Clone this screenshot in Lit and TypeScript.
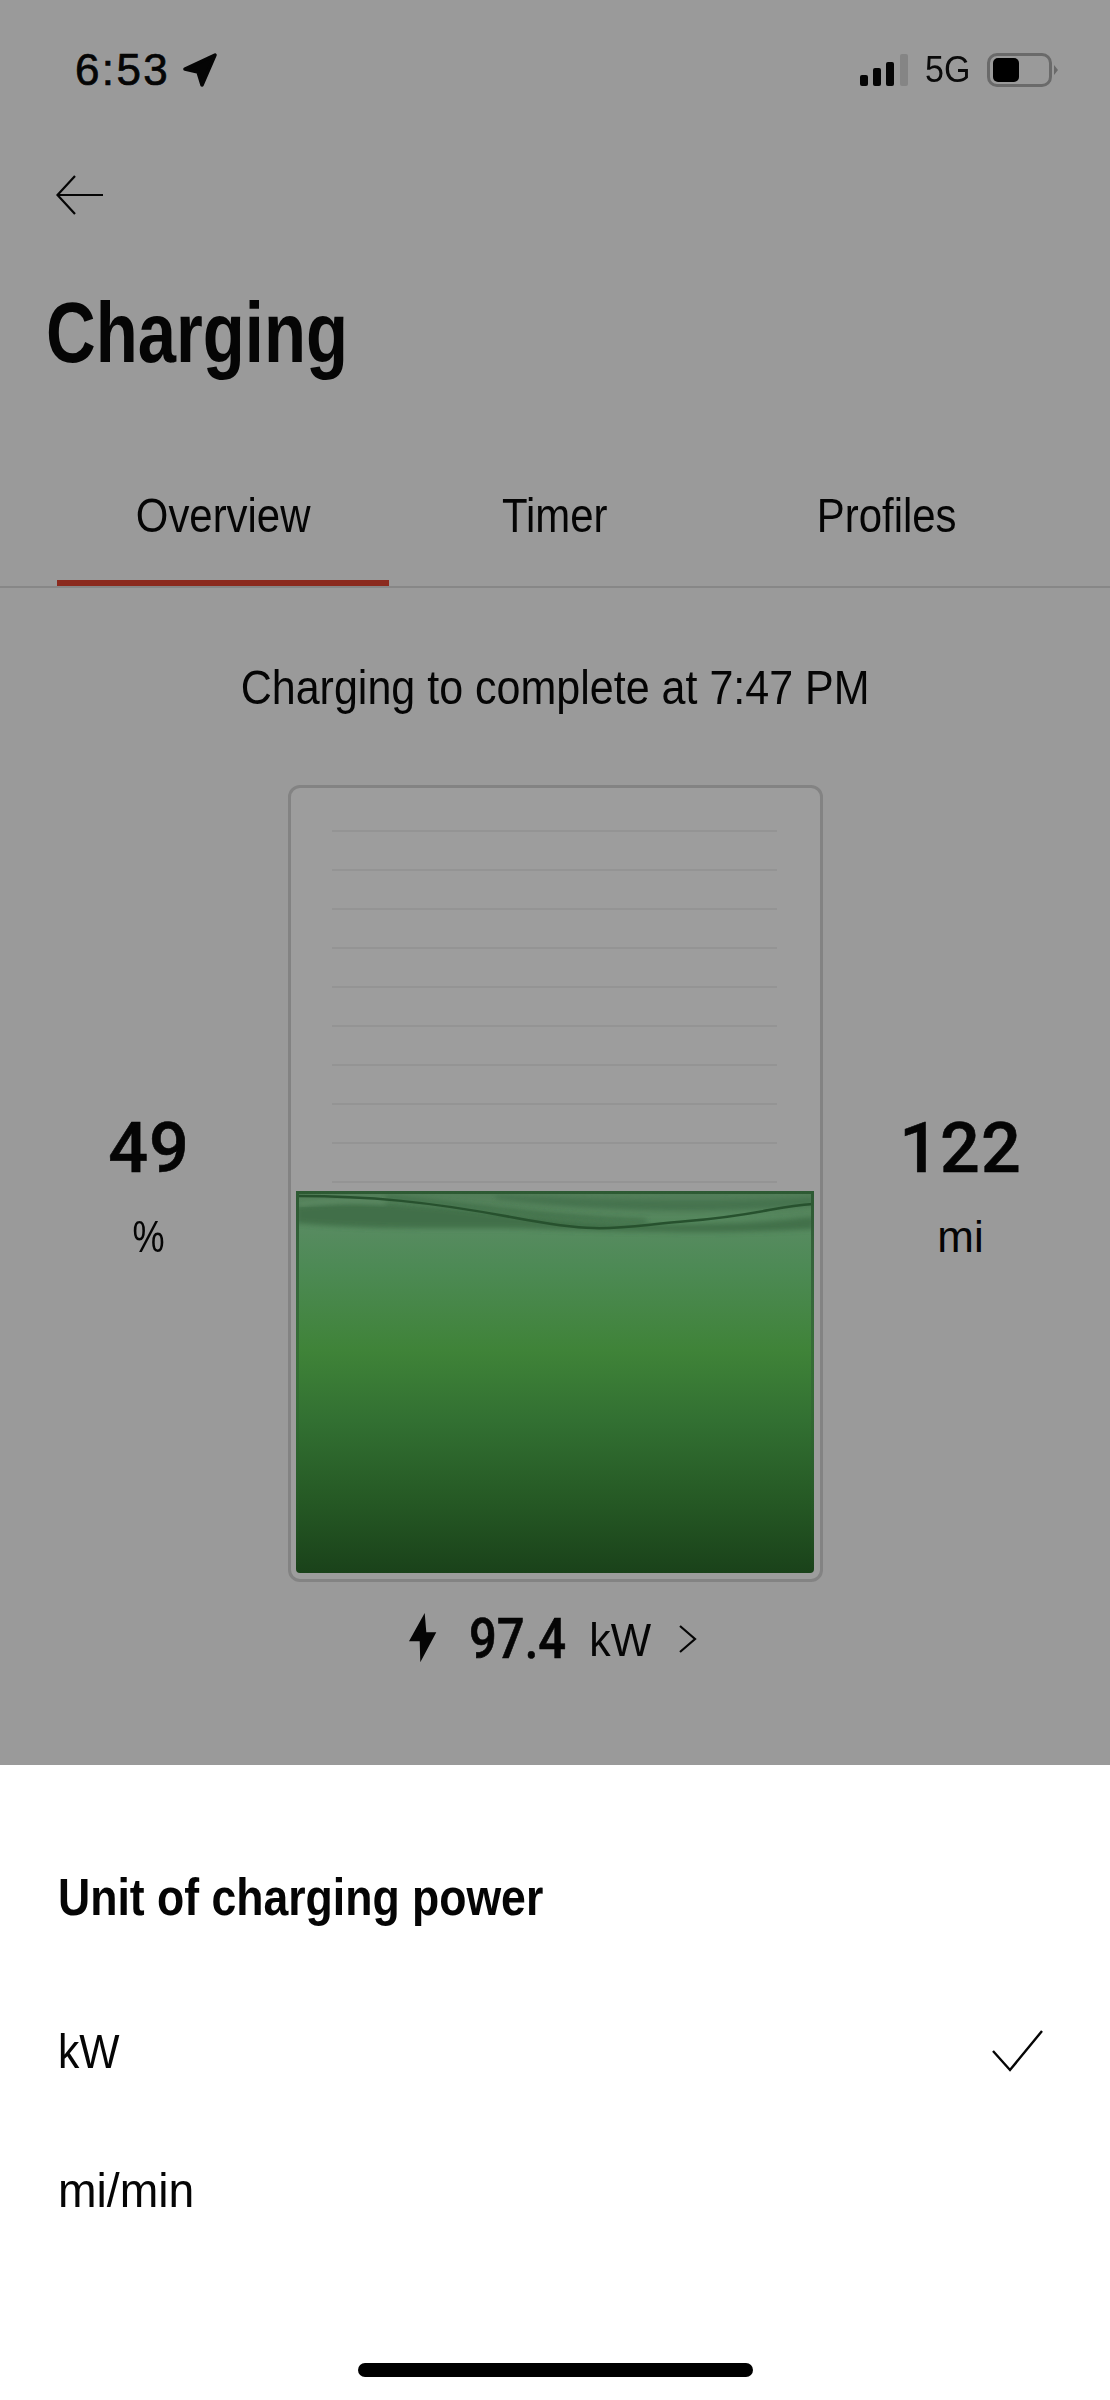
import { LitElement, html, css, svg } from "lit";
import { customElement } from "lit/decorators.js";

const lines = Array.from({ length: 10 });

@customElement("app-root")
export class AppRoot extends LitElement {
  static styles = css`
    :host { display: flex; flex-direction: column; width: 1110px; height: 2400px; background: #9a9a9a; color: #050505;
      font-family: "Liberation Sans", Arial, sans-serif; overflow: hidden; }
    .n { display: inline-block; white-space: nowrap; transform-origin: center; }
    .l { transform-origin: left center; }
    .s80 { transform: scaleX(0.8); }
    .s855 { transform: scaleX(0.855); }
    .s87 { transform: scaleX(0.87); }
    .s878 { transform: scaleX(0.878); }
    .s857 { transform: scaleX(0.857); }
    .s89 { transform: scaleX(0.89); }
    .s93 { transform: scaleX(0.93); }
    .s945 { transform: scaleX(0.945); }
    .s92 { transform: scaleX(0.92); }
    .status { height: 140px; flex: none; display: flex; align-items: center; justify-content: space-between; padding: 0 52px 0 75px; box-sizing: border-box; }
    .time { display: flex; align-items: center; gap: 12px; font-size: 44px; letter-spacing: 2.400px; -webkit-text-stroke: 0.7px #050505; }
    .sys { display: flex; align-items: center; }
    .signal { display: flex; align-items: flex-end; gap: 5.300px; height: 32px; margin-right: 15px; }
    .signal i { display: block; width: 8px; background: #050505; border-radius: 2px; }
    .signal i.off { background: #858585; }
    .fiveg { font-size: 37px; margin-right: 15px; color: #0a0a0a; }
    .battery { display: flex; align-items: center; gap: 2px; }
    .cell { width: 65px; height: 34px; box-sizing: border-box; border: 3px solid #6a6a6a; border-radius: 10px; padding: 2px 3px; }
    .cell b { display: block; width: 26px; height: 24px; background: #000; border-radius: 5px; }
    .tip { width: 4px; height: 10px; background: #6a6a6a; clip-path: polygon(0 0, 100% 50%, 0 100%); }
    .back { height: 104px; flex: none; box-sizing: border-box; padding: 5px 0 0 56px; display: flex; align-items: center; }
    .title { height: 174px; flex: none; box-sizing: border-box; padding: 2px 0 0 46px; display: flex; align-items: center; font-size: 86px; font-weight: 700; }
    .tabs { flex: none; display: grid; grid-template-columns: repeat(3, 332px); padding: 0 57px; height: 170px; box-sizing: border-box; border-bottom: 2px solid #878787; }
    .tab { height: 168px; box-sizing: border-box; padding-top: 69px; text-align: center; font-size: 49px; line-height: 56px; }
    .tab.active { border-bottom: 6px solid #8b2a1e; }
    .message { height: 197px; flex: none; display: flex; align-items: center; justify-content: center; font-size: 49px; }
    .gauge { height: 797px; flex: none; display: grid; grid-template-columns: 288px 535px 287px; }
    .side { display: flex; flex-direction: column; align-items: center; padding-top: 329px; }
    .num { font: 500 70px/68px Roboto, sans-serif; height: 68px; letter-spacing: 1px; -webkit-text-stroke: 0.6px #050505; }
    .side.left .num, .side.left .unit { transform: translateX(5px); }
    .side.right .num, .side.right .unit { transform: translateX(-6px); }
    .unit { font-size: 44px; line-height: 50px; margin-top: 30px; }
    .side.left .unit .n { transform: scaleX(0.82); }
    .frame { box-sizing: border-box; border: 3px solid #838383; border-radius: 12px; background: #9d9d9d; padding: 40px 5px 6px; display: flex; flex-direction: column; height: 797px; }
    .lines { display: flex; flex-direction: column; gap: 37px; padding: 2px 38px 0 36px; height: 363px; box-sizing: border-box; flex: none; }
    .lines i { display: block; height: 2px; background: #949494; }
    .fill { display: block; width: 518px; height: 382px; flex: none; }
    .power { height: 183px; flex: none; box-sizing: border-box; padding: 28px 0 0 409px; }
    .power-row { display: flex; align-items: center; height: 56px; }
    .kw-num { font: 500 55px/56px Roboto, sans-serif; margin-left: 32px; -webkit-text-stroke: 0.6px #050505; transform: translateY(1px); }
    .kw-unit { font-size: 46px; line-height: 56px; margin-left: 9px; transform: translateY(2px); }
    .chev { margin-left: 26px; transform: translateY(1px); }
    .sheet { flex: 1; background: #fff; color: #050505; padding-left: 58px; padding-right: 66px; display: flex; flex-direction: column; min-height: 0; }
    .sheet-title { font-size: 52px; font-weight: 700; height: 216px; box-sizing: border-box; padding-top: 102px; line-height: 60px; }
    .option { display: flex; align-items: center; justify-content: space-between; font-size: 49px; height: 139px; line-height: 56px; }
    .home-wrap { display: flex; justify-content: center; margin: auto -66px 23px -58px; }
    .home { width: 395px; height: 14px; background: #000; border-radius: 7px; }
  `;

  render() {
    return html`
      <div class="status">
        <div class="time">6:53
          <svg width="36" height="35" viewBox="0 0 36 35"><path d="M3 16 33 2 20 32 16 19Z" fill="#050505" stroke="#050505" stroke-width="3.500" stroke-linejoin="round"/></svg>
        </div>
        <div class="sys">
          <div class="signal">
            <i style="height:11px"></i><i style="height:18px"></i><i style="height:24px"></i><i class="off" style="height:32px"></i>
          </div>
          <div class="fiveg"><span class="n s92">5G</span></div>
          <div class="battery"><div class="cell"><b></b></div><div class="tip"></div></div>
        </div>
      </div>
      <div class="back">
        <svg width="48" height="40" viewBox="0 0 48 40" fill="none" stroke="#050505" stroke-width="2.200"><path d="M47 20H2"/><path d="M19 1 1.500 20 19 39"/></svg>
      </div>
      <div class="title"><span class="n l s80">Charging</span></div>
      <div class="tabs">
        <div class="tab active"><span class="n s855">Overview</span></div>
        <div class="tab"><span class="n s855">Timer</span></div>
        <div class="tab"><span class="n s855">Profiles</span></div>
      </div>
      <div class="message"><span class="n s878">Charging to complete at 7:47 PM</span></div>
      <div class="gauge">
        <div class="side left"><div class="num">49</div><div class="unit"><span class="n">%</span></div></div>
        <div class="frame">
          <div class="lines">${lines.map(() => html`<i></i>`)}</div>
          ${this.renderFill()}
        </div>
        <div class="side right"><div class="num">122</div><div class="unit"><span class="n">mi</span></div></div>
      </div>
      <div class="power">
        <div class="power-row">
          <svg width="28" height="50" viewBox="0 0 28 50"><path d="M15.700 0 0 28.300H10.700L11.300 49.300 27.300 19.300H17.300Z" fill="#050505"/></svg>
          <div class="kw-num"><span class="n l s89">97.4</span></div>
          <div class="kw-unit"><span class="n s93">kW</span></div>
          <svg class="chev" width="18" height="28" viewBox="0 0 18 28" fill="none" stroke="#050505" stroke-width="2.200"><path d="M1 1 16 14 1 27"/></svg>
        </div>
      </div>
      <div class="sheet">
        <div class="sheet-title"><span class="n l s857">Unit of charging power</span></div>
        <div class="option"><span class="n l s87">kW</span>
          <svg width="52" height="42" viewBox="0 0 52 42" fill="none" stroke="#050505" stroke-width="2.400"><path d="M1 21 18 40 50 1"/></svg>
        </div>
        <div class="option"><span class="n l s945">mi/min</span></div>
        <div class="home-wrap"><div class="home"></div></div>
      </div>
    `;
  }

  renderFill() {
    return svg`<svg class="fill" viewBox="0 0 518 382" preserveAspectRatio="none">
      <defs>
        <linearGradient id="g" x1="0" y1="0" x2="0" y2="1">
          <stop offset="0" stop-color="#527d58"/>
          <stop offset="0.1" stop-color="#578b60"/>
          <stop offset="0.2" stop-color="#4d8a55"/>
          <stop offset="0.42" stop-color="#3f8338"/>
          <stop offset="0.6" stop-color="#327032"/>
          <stop offset="0.8" stop-color="#265a25"/>
          <stop offset="1" stop-color="#1a421a"/>
        </linearGradient>
        <linearGradient id="edge" gradientUnits="userSpaceOnUse" x1="0" y1="0" x2="0" y2="382">
          <stop offset="0" stop-color="#2d5a33"/>
          <stop offset="0.5" stop-color="#2d5a33" stop-opacity="0.45"/>
          <stop offset="1" stop-color="#2d5a33" stop-opacity="0"/>
        </linearGradient>
        <filter id="soft" x="-5%" y="-40%" width="110%" height="180%"><feGaussianBlur stdDeviation="2.500"/></filter>
      </defs>
      <rect width="518" height="382" rx="4" fill="url(#g)"/>
      <path d="M0 16C60 8 120 14 200 22S330 34 400 33 490 28 518 26V38C420 44 300 40 240 38S80 40 0 32Z" fill="#3c6b45" opacity="0.8" filter="url(#soft)"/>
      <path d="M90 6C170 14 260 28 350 30" fill="none" stroke="#3a6843" stroke-width="4" opacity="0.8" filter="url(#soft)"/>
      <path d="M200 4C300 8 420 12 518 6V14C420 24 300 20 200 8Z" fill="#3f6d49" opacity="0.7" filter="url(#soft)"/>
      <path d="M3 14C30 10 60 9 90 12" fill="none" stroke="#6a9670" stroke-width="3" opacity="0.7" filter="url(#soft)"/>
      <path d="M2 5C70 5 130 10 220 27S320 36 392 30 480 15 517 13" fill="none" stroke="#27512e" stroke-width="2.500"/>
      <path d="M1.500 382V1.500H516.500V382" fill="none" stroke="url(#edge)" stroke-width="3"/>
    </svg>`;
  }
}
